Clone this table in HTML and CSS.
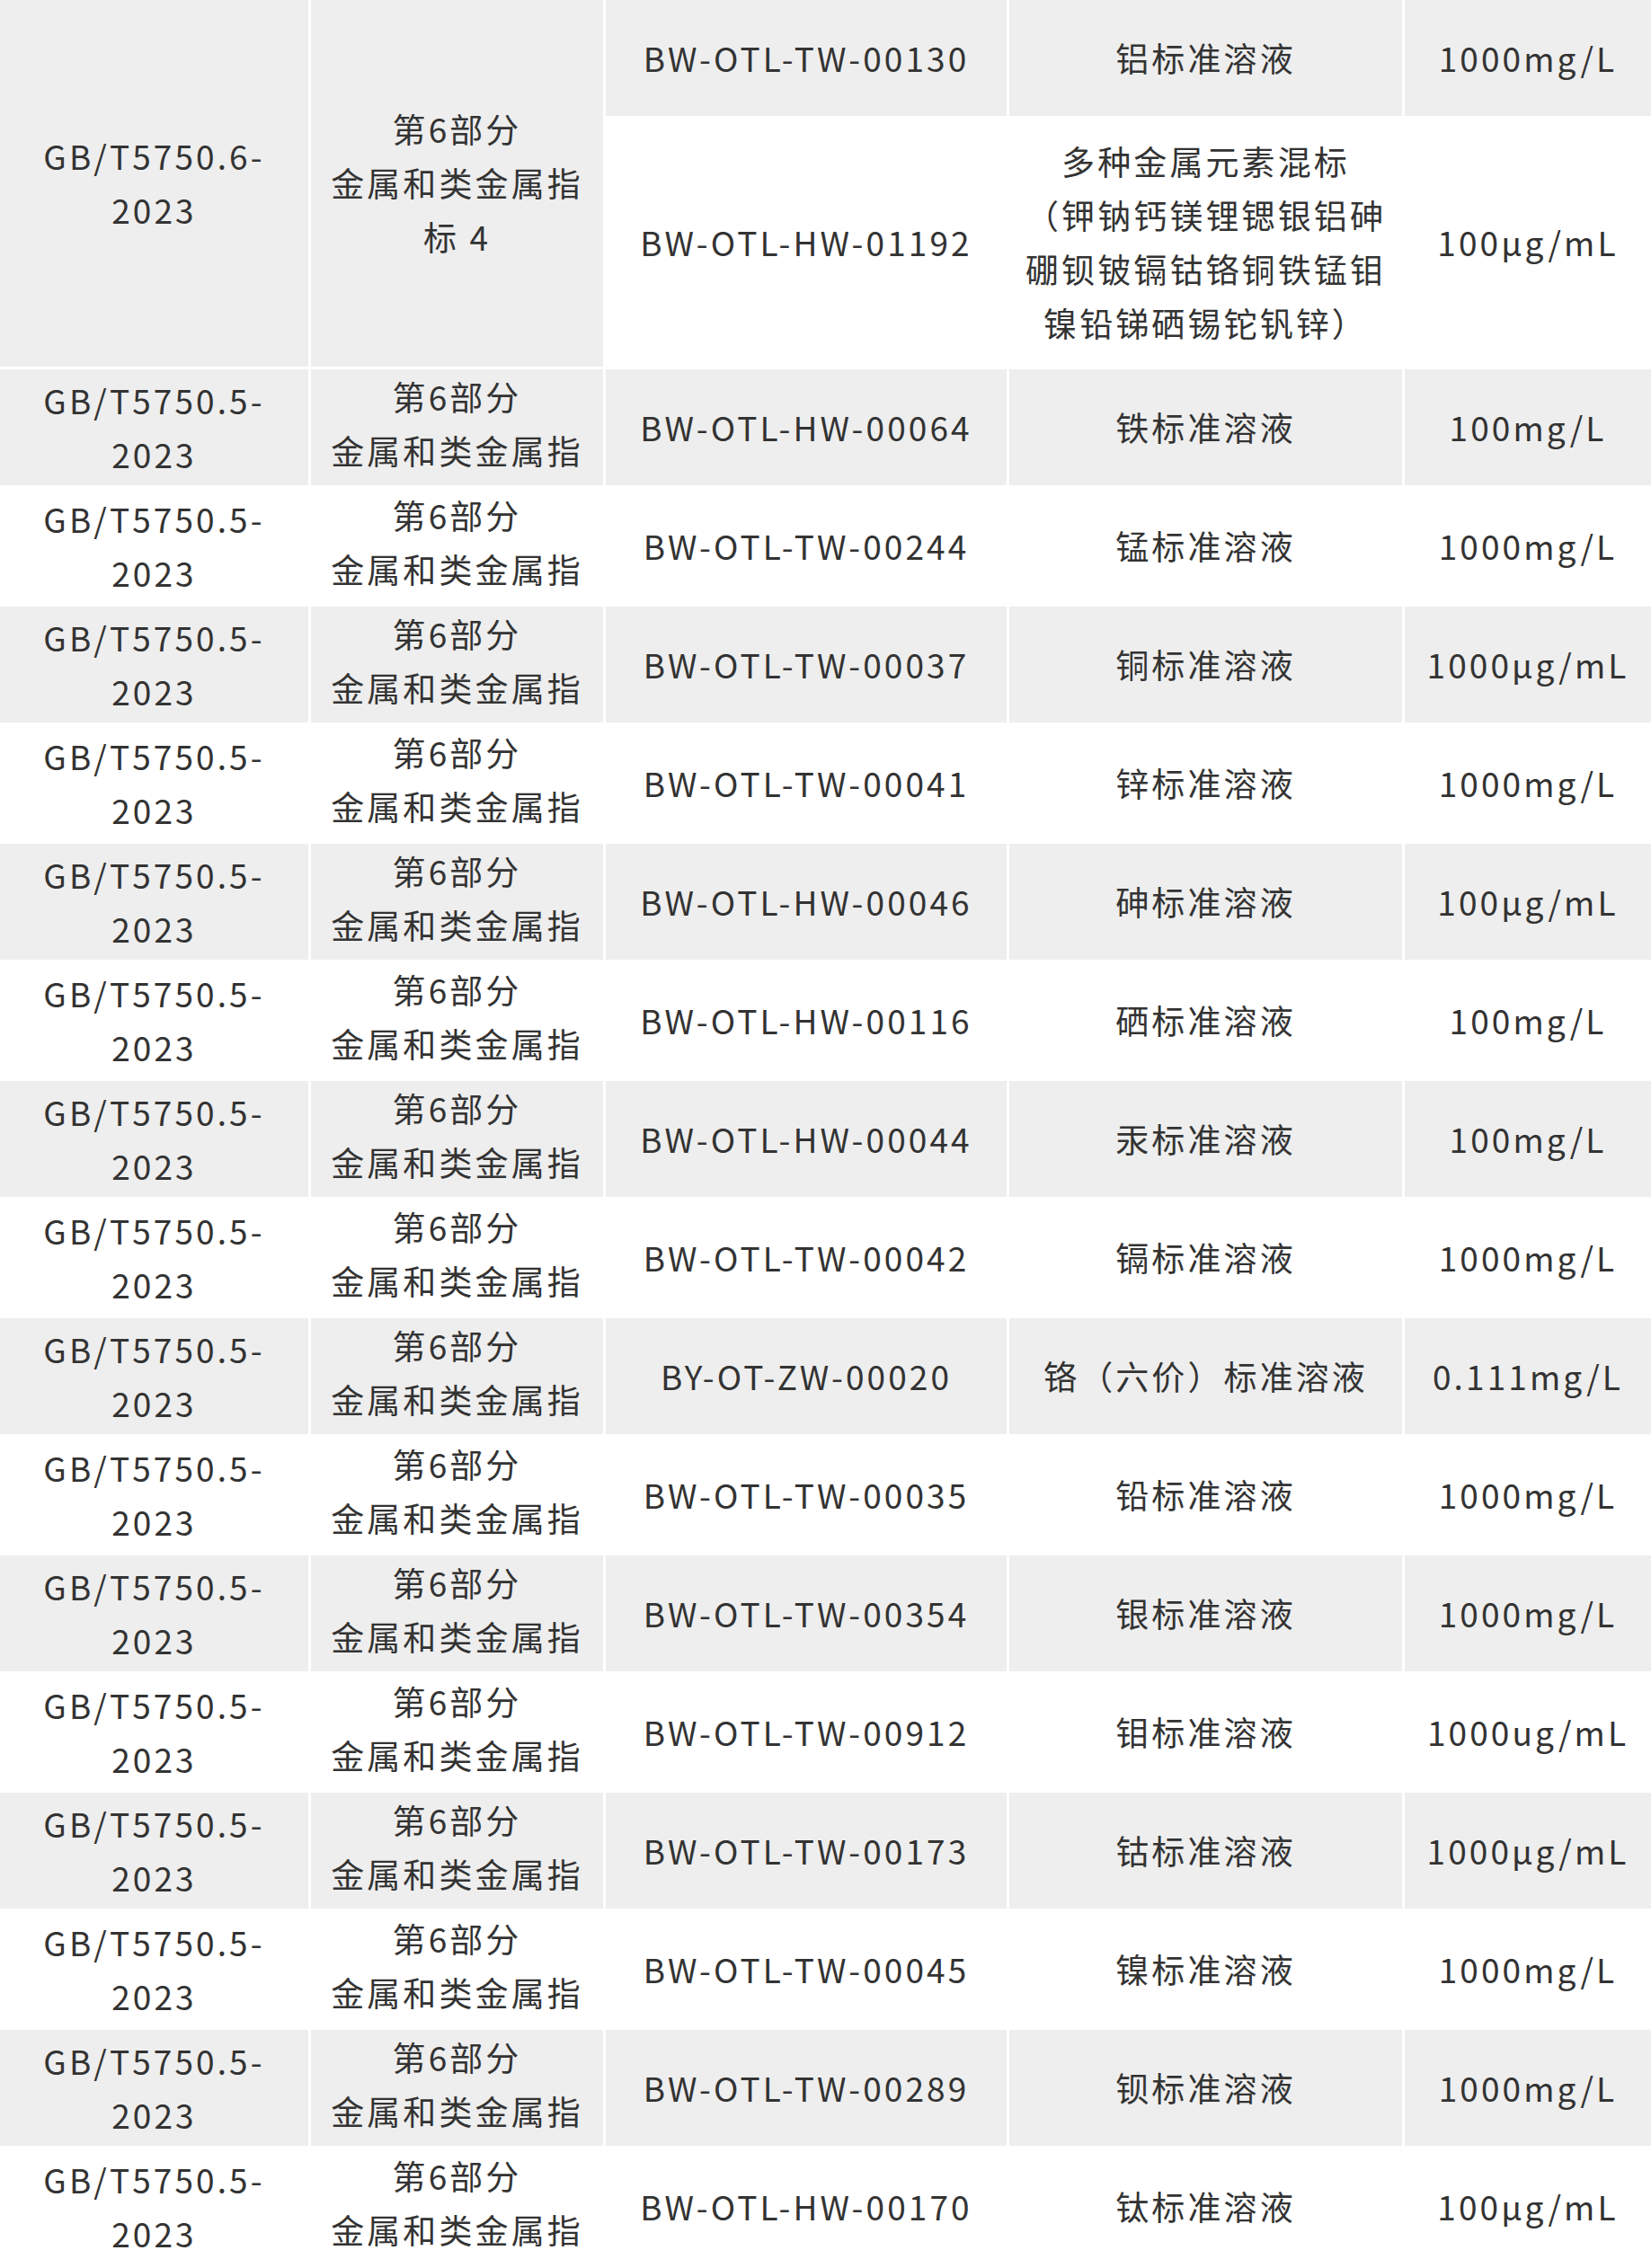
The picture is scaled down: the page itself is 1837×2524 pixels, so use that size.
FILE: index.html
```html
<!DOCTYPE html>
<html lang="zh-CN">
<head>
<meta charset="utf-8">
<title>标准溶液</title>
<link rel="stylesheet" href="styles.css">
</head>
<body>
<table class="std-table">
  <colgroup>
    <col class="c1"><col class="c2"><col class="c3"><col class="c4"><col class="c5">
  </colgroup>
  <tbody>
    <tr class="grey first">
      <td rowspan="2" class="tall">GB/T5750.6-2023</td>
      <td rowspan="2" class="tall">第6部分<br>金属和类金属指标 4</td>
      <td>BW-OTL-TW-00130</td>
      <td>铝标准溶液</td>
      <td>1000mg/L</td>
    </tr>
    <tr class="white second">
      <td>BW-OTL-HW-01192</td>
      <td>多种金属元素混标<br>（钾钠钙镁锂锶银铝砷硼钡铍镉钴铬铜铁锰钼镍铅锑硒锡铊钒锌）</td>
      <td>100μg/mL</td>
    </tr>
    <tr class="grey row"><td>GB/T5750.5-2023</td><td class="part">第6部分<br>金属和类金属指</td><td>BW-OTL-HW-00064</td><td>铁标准溶液</td><td>100mg/L</td></tr>
    <tr class="white row"><td>GB/T5750.5-2023</td><td class="part">第6部分<br>金属和类金属指</td><td>BW-OTL-TW-00244</td><td>锰标准溶液</td><td>1000mg/L</td></tr>
    <tr class="grey row"><td>GB/T5750.5-2023</td><td class="part">第6部分<br>金属和类金属指</td><td>BW-OTL-TW-00037</td><td>铜标准溶液</td><td>1000μg/mL</td></tr>
    <tr class="white row"><td>GB/T5750.5-2023</td><td class="part">第6部分<br>金属和类金属指</td><td>BW-OTL-TW-00041</td><td>锌标准溶液</td><td>1000mg/L</td></tr>
    <tr class="grey row"><td>GB/T5750.5-2023</td><td class="part">第6部分<br>金属和类金属指</td><td>BW-OTL-HW-00046</td><td>砷标准溶液</td><td>100μg/mL</td></tr>
    <tr class="white row"><td>GB/T5750.5-2023</td><td class="part">第6部分<br>金属和类金属指</td><td>BW-OTL-HW-00116</td><td>硒标准溶液</td><td>100mg/L</td></tr>
    <tr class="grey row"><td>GB/T5750.5-2023</td><td class="part">第6部分<br>金属和类金属指</td><td>BW-OTL-HW-00044</td><td>汞标准溶液</td><td>100mg/L</td></tr>
    <tr class="white row"><td>GB/T5750.5-2023</td><td class="part">第6部分<br>金属和类金属指</td><td>BW-OTL-TW-00042</td><td>镉标准溶液</td><td>1000mg/L</td></tr>
    <tr class="grey row"><td>GB/T5750.5-2023</td><td class="part">第6部分<br>金属和类金属指</td><td>BY-OT-ZW-00020</td><td>铬（六价）标准溶液</td><td>0.111mg/L</td></tr>
    <tr class="white row"><td>GB/T5750.5-2023</td><td class="part">第6部分<br>金属和类金属指</td><td>BW-OTL-TW-00035</td><td>铅标准溶液</td><td>1000mg/L</td></tr>
    <tr class="grey row"><td>GB/T5750.5-2023</td><td class="part">第6部分<br>金属和类金属指</td><td>BW-OTL-TW-00354</td><td>银标准溶液</td><td>1000mg/L</td></tr>
    <tr class="white row"><td>GB/T5750.5-2023</td><td class="part">第6部分<br>金属和类金属指</td><td>BW-OTL-TW-00912</td><td>钼标准溶液</td><td>1000ug/mL</td></tr>
    <tr class="grey row"><td>GB/T5750.5-2023</td><td class="part">第6部分<br>金属和类金属指</td><td>BW-OTL-TW-00173</td><td>钴标准溶液</td><td>1000μg/mL</td></tr>
    <tr class="white row"><td>GB/T5750.5-2023</td><td class="part">第6部分<br>金属和类金属指</td><td>BW-OTL-TW-00045</td><td>镍标准溶液</td><td>1000mg/L</td></tr>
    <tr class="grey row"><td>GB/T5750.5-2023</td><td class="part">第6部分<br>金属和类金属指</td><td>BW-OTL-TW-00289</td><td>钡标准溶液</td><td>1000mg/L</td></tr>
    <tr class="white row"><td>GB/T5750.5-2023</td><td class="part">第6部分<br>金属和类金属指</td><td>BW-OTL-HW-00170</td><td>钛标准溶液</td><td>100μg/mL</td></tr>
  </tbody>
</table>
</body>
</html>
```
FILE: styles.css
```css
html, body {
  margin: 0;
  padding: 0;
  background: #ffffff;
}

.std-table {
  width: 1837px;
  table-layout: fixed;
  border-collapse: separate;
  border-spacing: 0;
  font-family: "Noto Sans CJK SC", "Noto Sans", sans-serif;
  font-size: 37px;
  line-height: 60px;
  letter-spacing: 3.1px;
  color: #333333;
}

.c1 { width: 346px; }
.c2 { width: 328px; }
.c3 { width: 449px; }
.c4 { width: 440px; }
.c5 { width: 274px; }

.std-table td {
  padding: 0 10px;
  text-align: center;
  vertical-align: middle;
  border-right: 3px solid #ffffff;
  border-bottom: 3px solid #ffffff;
}

.std-table td:last-child {
  border-right: 0;
}

.first td { height: 127px; padding-bottom: 2px; }
.second td { height: 274px; padding-bottom: 2px; }
.row td { height: 127px; padding-bottom: 2px; }
.row td.part { height: 120px; padding-bottom: 9px; }

.grey td,
.first td.tall {
  background: #eeeeee;
}

.white td {
  background: #ffffff;
}
```
